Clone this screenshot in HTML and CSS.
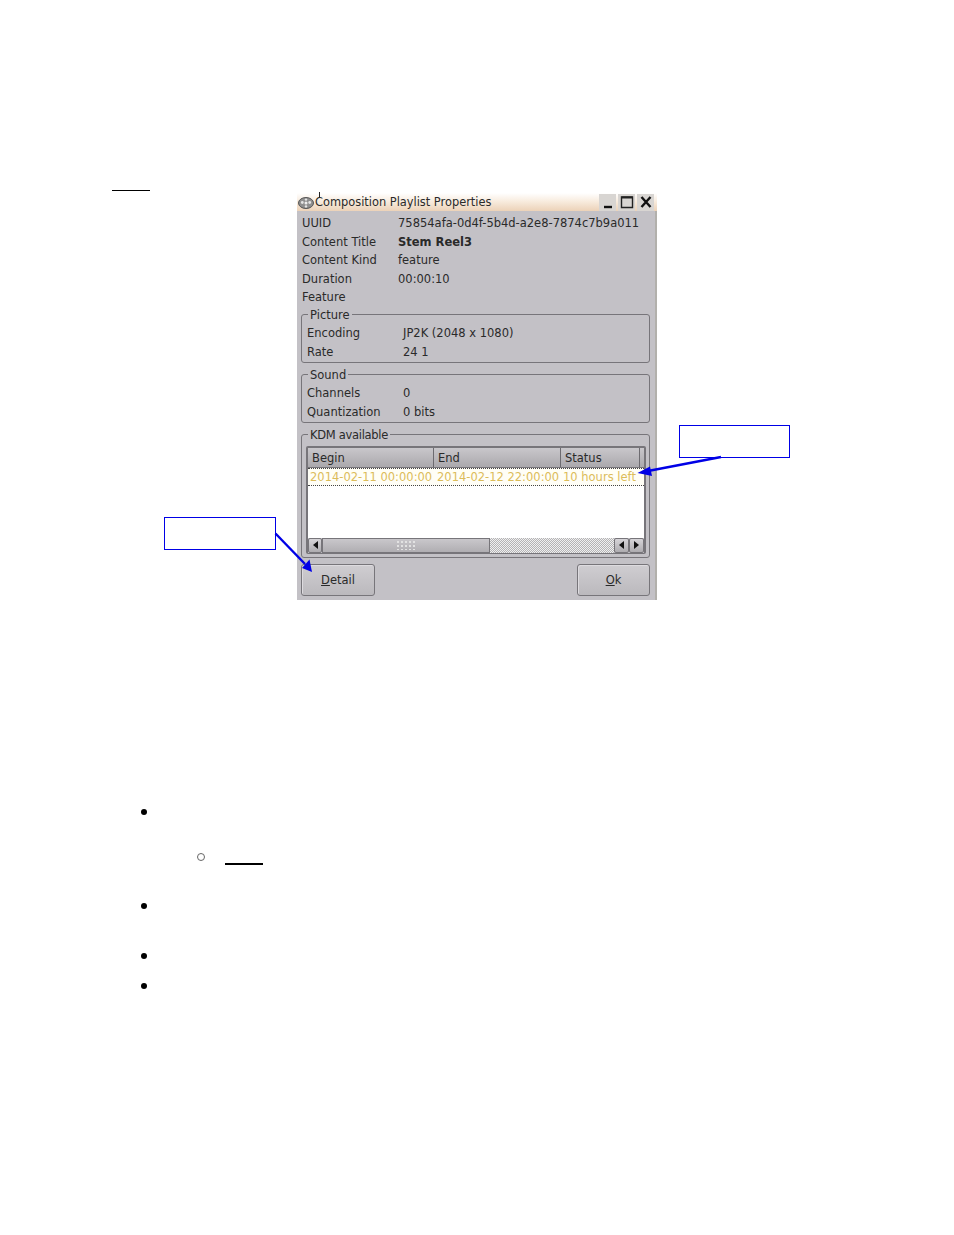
FILE: index.html
```html
<!DOCTYPE html>
<html lang="en">
<head>
    <meta charset="UTF-8">
    <meta name="viewport" content="width=device-width, initial-scale=1.0">
    <title>Composition Playlist Properties</title>
    <link rel="stylesheet" href="styles.css">
</head>
<body>

    <div class="page">
        <div class="blank-link top-link"></div>

        <!-- Dialog screenshot -->
        <div class="window">
            <div class="titlebar">
                <svg class="reel-icon" viewBox="0 0 16 14" width="16" height="14">
                    <ellipse cx="8" cy="7" rx="7.5" ry="5.5" fill="#8f8f8f" stroke="#555"/>
                    <circle cx="8" cy="7" r="1.5" fill="#eee"/>
                    <circle cx="4.3" cy="6.5" r="1.4" fill="#e4e4e4"/>
                    <circle cx="11.7" cy="6.5" r="1.4" fill="#e4e4e4"/>
                    <circle cx="8" cy="3.6" r="1.2" fill="#e4e4e4"/>
                    <circle cx="8" cy="10.4" r="1.2" fill="#e4e4e4"/>
                </svg>
                <span class="title-text">Composition Playlist Properties</span>
                <div class="title-buttons">
                    <div class="title-button"><svg viewBox="0 0 16 16" width="16" height="16"><path d="M4 13h8" stroke="#111" stroke-width="2.4"/></svg></div>
                    <div class="title-button"><svg viewBox="0 0 16 16" width="16" height="16"><path d="M2.5 3h11v10.500h-11z" fill="none" stroke="#222" stroke-width="1.4"/><path d="M2.500 3.500h11" stroke="#222" stroke-width="2"/></svg></div>
                    <div class="title-button"><svg viewBox="0 0 16 16" width="16" height="16"><path d="M3.500 3l9 10M12.500 3l-9 10" stroke="#111" stroke-width="2.400"/></svg></div>
                </div>
            </div>

            <div class="content">
                <div class="info-rows">
                    <div class="row"><span class="label">UUID</span><span>75854afa-0d4f-5b4d-a2e8-7874c7b9a011</span></div>
                    <div class="row"><span class="label">Content Title</span><strong>Stem Reel3</strong></div>
                    <div class="row"><span class="label">Content Kind</span><span>feature</span></div>
                    <div class="row"><span class="label">Duration</span><span>00:00:10</span></div>
                    <div class="row"><span class="label">Feature</span></div>
                </div>

                <fieldset class="group group-picture">
                    <legend>Picture</legend>
                    <div class="row"><span class="label">Encoding</span><span>JP2K (2048 x 1080)</span></div>
                    <div class="row"><span class="label">Rate</span><span>24 1</span></div>
                </fieldset>

                <fieldset class="group group-sound">
                    <legend>Sound</legend>
                    <div class="row"><span class="label">Channels</span><span>0</span></div>
                    <div class="row"><span class="label">Quantization</span><span>0 bits</span></div>
                </fieldset>

                <fieldset class="group group-kdm">
                    <legend>KDM available</legend>
                    <div class="list">
                        <div class="list-header">
                            <div class="col col-begin">Begin</div>
                            <div class="col col-end">End</div>
                            <div class="col col-status">Status</div>
                            <div class="col col-rest"></div>
                        </div>
                        <div class="list-row">
                            <div class="col-begin">2014-02-11 00:00:00</div>
                            <div class="col-end">2014-02-12 22:00:00</div>
                            <div class="col-status">10 hours left</div>
                        </div>
                        <div class="list-empty"></div>
                        <div class="scrollbar">
                            <div class="scroll-btn"><i class="arrow-left"></i></div>
                            <div class="scroll-thumb"><span class="grip"></span></div>
                            <div class="scroll-track"></div>
                            <div class="scroll-btn scroll-btn-end"><i class="arrow-left"></i></div>
                            <div class="scroll-btn scroll-btn-end"><i class="arrow-right"></i></div>
                        </div>
                    </div>
                </fieldset>

                <div class="buttons">
                    <button class="btn btn-detail"><u>D</u>etail</button>
                    <button class="btn btn-ok"><u>O</u>k</button>
                </div>
            </div>
        </div>

        <!-- Bullet list, text is blank in the source -->
        <div class="bullets">
            <div class="bullet bullet-first"></div>
            <div class="sub-bullet"><span class="circle"></span><span class="blank-link"></span></div>
            <div class="bullet bullet-third"></div>
            <div class="bullet bullet-fourth"></div>
            <div class="bullet bullet-fifth"></div>
        </div>

        <!-- Callouts on top of the screenshot -->
        <div class="cursor-tick"></div>
        <div class="callout callout-status"></div>
        <div class="callout callout-detail"></div>
        <svg class="arrows" viewBox="0 0 954 1235" width="954" height="1235">
            <path d="M721 457L648 471" stroke="#0000e6" stroke-width="2.4" fill="none"/>
            <path d="M637.500 473L650 466.500L652 476z" fill="#0000e6"/>
            <path d="M275.500 533.500L305 564" stroke="#0000e6" stroke-width="2.400" fill="none"/>
            <path d="M312 572L302 568L309.500 559.500z" fill="#0000e6"/>
        </svg>
    </div>

</body>
</html>
```

FILE: styles.css
```css
body {
    margin: 0;
    padding: 0;
    background-color: white;
    font-family: "DejaVu Sans", sans-serif;
}
.page {
    position: relative;
    width: 954px;
    height: 1235px;
    overflow: hidden;
}
.blank-link {
    display: block;
    width: 38px;
    height: 2px;
    background-color: black;
}
.top-link {
    height: 1px;
    margin-left: 112px;
    padding: 0;
    position: relative;
    top: 190px;
}
.window {
    width: 360px;
    height: 407px;
    margin-top: 192px;
    margin-left: 297px;
    background-color: #c3c1c6;
    border-right: 2px solid #b2b0ac;
    box-sizing: border-box;
    color: #2a2a2a;
    font-size: 12px;
    display: flex;
    flex-direction: column;
}
.titlebar {
    height: 18px;
    display: flex;
    align-items: center;
    background: linear-gradient(to bottom, #ffffff 0%, #f8ecdf 45%, #ecd2b8 100%);
    margin-right: -2px;
    flex-shrink: 0;
}
.reel-icon {
    margin-left: 1px;
    margin-top: 1px;
}
.title-text {
    margin-left: 1px;
    margin-top: 0;
    font-size: 11.4px;
}
.title-buttons {
    margin-left: auto;
    margin-right: 3px;
    margin-top: 0;
    display: flex;
    gap: 2px;
}
.title-button {
    width: 17px;
    height: 17px;
    background-color: #d8d5d2;
    display: flex;
    align-items: center;
    justify-content: center;
}
.content {
    flex: 1;
    padding: 3px 5px 0 4px;
    display: flex;
    flex-direction: column;
}
.info-rows {
    padding-left: 1px;
}
.row {
    display: flex;
    height: 18.6px;
    line-height: 18.6px;
    white-space: nowrap;
    font-size: 11.5px;
}
.row .label {
    width: 96px;
    flex-shrink: 0;
}
.group {
    margin: 0;
    padding: 2px 0 0 5px;
    border: 1px solid #77757a;
    border-radius: 3px;
    box-sizing: border-box;
    min-width: 0;
    font-size: 11.500px;
}
.group legend {
    margin-left: 1px;
    padding: 0 2px;
    line-height: 14px;
}
.group-picture {
    height: 55px;
    margin-top: 1px;
}
.group-sound {
    height: 55px;
    margin-top: 5px;
}
.group-kdm {
    height: 130px;
    margin-top: 5px;
    padding: 0 0 0 4px;
}
.group-kdm legend {
    margin-left: 2px;
    letter-spacing: -0.3px;
}
.list {
    width: 340px;
    height: 108px;
    margin-top: 4px;
    border: 2px solid #77757a;
    border-bottom-width: 1px;
    box-sizing: border-box;
    border-radius: 2px;
    background-color: white;
    display: flex;
    flex-direction: column;
    font-size: 11.500px;
}
.list-header {
    display: flex;
    height: 20px;
    line-height: 21px;
    flex-shrink: 0;
    background: linear-gradient(to bottom, #c9c7cb, #a9a7ab);
}
.col {
    box-sizing: border-box;
    padding-left: 4px;
    border-right: 1px solid #6d6b70;
    border-bottom: 1px solid #77757a;
}
.col-begin {
    width: 126px;
}
.col-end {
    width: 127px;
}
.col-status {
    width: 79px;
}
.col-rest {
    flex: 1;
    border-right: none;
    padding-left: 0;
}
.list-row {
    display: flex;
    height: 18px;
    line-height: 16px;
    padding-left: 2px;
    box-sizing: border-box;
    border-top: 1px dotted #444;
    border-bottom: 1px dotted #444;
    color: #dcbc5a;
    white-space: nowrap;
    background-color: #fffef6;
}
.list-row .col-begin {
    width: 127px;
}
.list-row .col-end {
    width: 126px;
}
.list-empty {
    flex: 1;
}
.scrollbar {
    display: flex;
    height: 15px;
    flex-shrink: 0;
    margin-bottom: 0;
    background-color: #c3c1c6;
}
.scroll-btn {
    width: 14px;
    box-sizing: border-box;
    border: 1px solid #77757a;
    background: linear-gradient(to bottom, #d6d4d8, #aeacb0);
    border-radius: 2px;
    display: flex;
    align-items: center;
    justify-content: center;
}
.scroll-btn-end {
    width: 15px;
}
.arrow-left {
    width: 0;
    height: 0;
    border-top: 4px solid transparent;
    border-bottom: 4px solid transparent;
    border-right: 5px solid #111;
}
.arrow-right {
    width: 0;
    height: 0;
    border-top: 4px solid transparent;
    border-bottom: 4px solid transparent;
    border-left: 5px solid #111;
}
.scroll-thumb {
    width: 168px;
    box-sizing: border-box;
    border: 1px solid #77757a;
    background: linear-gradient(to bottom, #c9c7cb, #b0aeb2);
    display: flex;
    align-items: center;
    justify-content: center;
}
.grip {
    width: 20px;
    height: 10px;
    background-image: radial-gradient(#e2e2e2 1px, transparent 1.2px);
    background-size: 4px 4px;
}
.scroll-track {
    width: 124px;
    background-color: #d6d5d7;
    background-image: repeating-conic-gradient(#b4b3b5 0 25%, #f0f0f0 0 50%);
    background-size: 2px 2px;
}
.buttons {
    display: flex;
    justify-content: space-between;
    align-items: flex-end;
    height: 38px;
}
.btn {
    height: 32px;
    padding: 0;
    border: 1px solid #77757a;
    border-radius: 3px;
    background: linear-gradient(to bottom, #cfcdd1, #bbb9bd);
    box-shadow: inset 1px 1px 0 #dddbdf;
    color: #2a2a2a;
    font-family: "DejaVu Sans", sans-serif;
    font-size: 11.500px;
}
.btn-detail {
    width: 74px;
}
.btn-ok {
    width: 73px;
}
.bullets {
    margin-top: 209px;
    margin-left: 141px;
}
.bullet {
    width: 6px;
    height: 6px;
    border-radius: 50%;
    background-color: black;
}
.sub-bullet {
    display: flex;
    align-items: flex-start;
    margin-top: 38px;
    margin-left: 56px;
}
.circle {
    width: 6px;
    height: 6px;
    border: 1px solid #666;
    border-radius: 50%;
}
.sub-bullet .blank-link {
    margin-left: 20px;
    margin-top: 10px;
}
.bullet-third {
    margin-top: 38px;
}
.bullet-fourth {
    margin-top: 44px;
}
.bullet-fifth {
    margin-top: 24px;
}
.cursor-tick {
    position: absolute;
    left: 319px;
    top: 192px;
    width: 1px;
    height: 5px;
    background-color: #222;
}
.callout {
    position: absolute;
    box-sizing: border-box;
    border: 1px solid #0000e6;
    background-color: white;
}
.callout-status {
    left: 679px;
    top: 425px;
    width: 111px;
    height: 33px;
}
.callout-detail {
    left: 164px;
    top: 517px;
    width: 112px;
    height: 33px;
}
.arrows {
    position: absolute;
    left: 0;
    top: 0;
}
```
